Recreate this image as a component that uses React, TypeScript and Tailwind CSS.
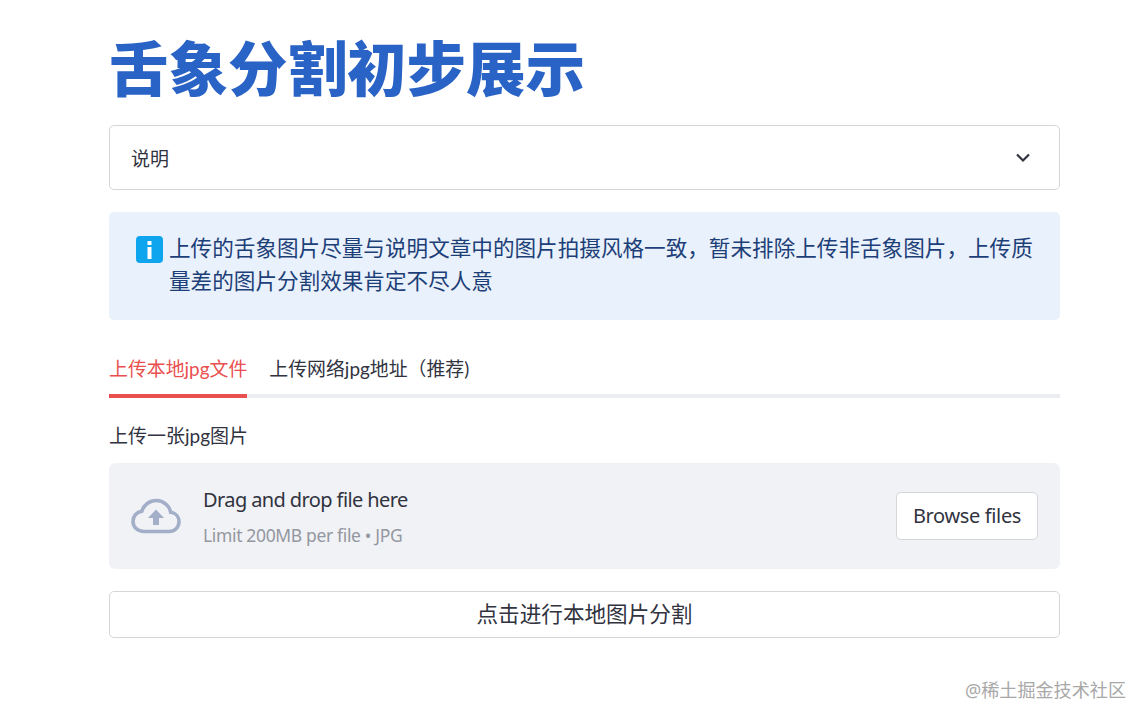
export default function App() {
  return (
    <div className="min-h-[721px] relative bg-white pl-[109px] pr-[85px] pt-[29px] text-[#31333f] font-['Noto_Sans','Noto_Sans_CJK_SC',sans-serif]">
      <h1 className="text-[59.5px] leading-[72px] font-black text-[#2a63c6] font-['Noto_Sans_CJK_SC',sans-serif]">舌象分割初步展示</h1>
      <div className="mt-[24px] h-[65px] border border-[#d6d6d8] rounded-[5px] flex items-center justify-between pl-[22px] pr-[28px]">
        <span className="text-[19px] pt-[3px] -ml-[1px]">说明</span>
        <svg width="16" height="10" viewBox="0 0 16 10" fill="none" stroke="#31333f" strokeWidth="2.2"><path d="M2 1.5 8 7.5 14 1.5" /></svg>
      </div>
      <div className="mt-[22px] h-[108px] bg-[#e9f1fc] rounded-[5px] flex pl-[27px] pr-[26px] pt-[19px] gap-[6px] text-[21.6px] leading-[33px] text-[#1d3f78]">
        <svg className="shrink-0 mt-[5px]" width="27" height="27" viewBox="0 0 27 27">
          <rect width="27" height="27" rx="4" fill="#0ea5ee" />
          <rect x="11.5" y="11" width="4" height="12" fill="#fff" />
          <rect x="11.5" y="5" width="4" height="4" fill="#fff" />
        </svg>
        <p>上传的舌象图片尽量与说明文章中的图片拍摄风格一致，暂未排除上传非舌象图片，上传质量差的图片分割效果肯定不尽人意</p>
      </div>
      <div className="mt-[22px] h-[56px] border-b-[4px] border-[#ecedf0] flex gap-[22px] text-[18.9px] font-['Lato','Noto_Sans_CJK_SC',sans-serif]">
        <div className="h-[56px] border-b-[4px] border-[#ea4f4f] text-[#ea4f4f] flex items-center pt-[2px]">上传本地jpg文件</div>
        <div className="h-[52px] flex items-center pt-[2px]">上传网络jpg地址（推荐)</div>
      </div>
      <div className="mt-[24px] text-[19px] leading-[28px] font-['Lato','Noto_Sans_CJK_SC',sans-serif]">上传一张jpg图片</div>
      <div className="mt-[13px] h-[106px] bg-[#f0f2f6] rounded-[6px] flex items-center justify-between pl-[22px] pr-[22px]">
        <div className="flex items-center gap-[22px]">
          <svg width="50" height="36" viewBox="0 0 50 36" fill="none">
            <path d="M13 33.5C6.5 33.5 2 29 2 23.3 2 18 5.8 14 10.8 13.2 12.8 6.8 18.6 2.5 25.2 2.5 32.8 2.5 38.6 8 39.7 14.3 44.6 14.9 48 18.8 48 23.8 48 29.3 43.6 33.5 38 33.5Z" stroke="#a3aec9" strokeWidth="3.6" />
            <path d="M25 11.5 33 20H28V27H22V20H17Z" fill="#a3aec9" />
          </svg>
          <div>
            <div className="text-[20px] leading-[28px] tracking-[-0.6px]">Drag and drop file here</div>
            <div className="mt-[9px] text-[17.5px] leading-[24px] text-[#9497a0] tracking-[-0.35px]">Limit 200MB per file • JPG</div>
          </div>
        </div>
        <button className="w-[142px] h-[48px] bg-white border border-[#d6d6d8] rounded-[5px] text-[20px] tracking-[-0.35px]">Browse files</button>
      </div>
      <button className="mt-[22px] block w-full h-[47px] bg-white border border-[#d6d6d8] rounded-[5px] text-[21.6px]">点击进行本地图片分割</button>
      <div className="absolute right-[19px] top-[678px] text-[18.1px] leading-[24px] text-[#a8a8a8]">@稀土掘金技术社区</div>
    </div>
  );
}
